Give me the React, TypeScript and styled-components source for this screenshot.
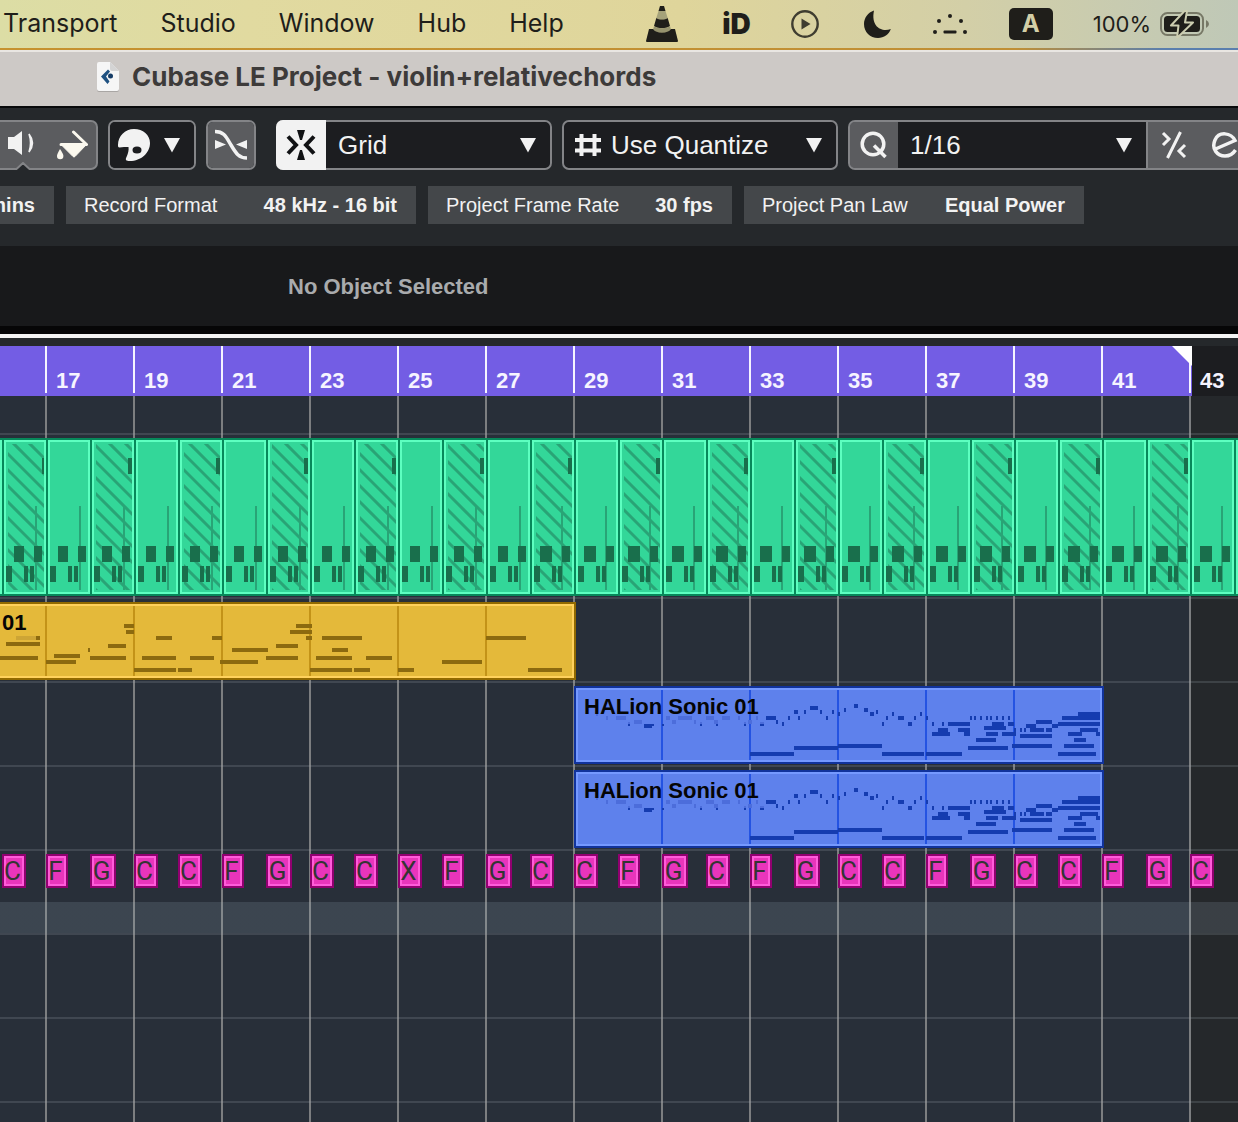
import React from "react";
import styled, { createGlobalStyle } from "styled-components";

const GlobalStyle = createGlobalStyle`
  *, *::before, *::after { box-sizing: border-box; }
  body {
    margin: 0;
    background: #25282b;
    font-family: "Liberation Sans", Arial, sans-serif;
    overflow: hidden;
  }
  button, select { font: inherit; color: inherit; }
`;

const Window = styled.div`
  display: flex;
  flex-direction: column;
  min-height: 100vh;
  overflow: hidden;
`;

/* ---------- system menu bar ---------- */

const MenuBar = styled.header`
  display: flex;
  align-items: center;
  height: 50px;
  padding: 0 28px 2px 3px;
  font-family: Inter, sans-serif;
  color: #1f1e1a;
  background:
    linear-gradient(90deg, #c6922f 0%, #c08f35 82%, #5a7fae 94%) 0 100% / 100% 2px no-repeat,
    linear-gradient(90deg, #dcdda5 0%, #e1daa0 20%, #dfd59b 55%, #d3cfa7 78%, #bfc8b7 100%);
`;

const MenuNav = styled.nav`
  display: flex;
  gap: 43px;
  padding-bottom: 2px;
`;

const MenuItem = styled.button`
  padding: 0;
  border: 0;
  background: none;
  font-size: 25px;
  line-height: 32px;
`;

const StatusArea = styled.div`
  display: flex;
  align-items: center;
  gap: 40px;
  margin-left: auto;
`;

const StatusButton = styled.button`
  display: flex;
  align-items: center;
  gap: 9px;
  padding: 0;
  border: 0;
  background: none;
  font-size: 22px;
  line-height: 32px;
  svg { display: block; flex: none; }
`;

const AppMark = styled.span`
  font-size: 28px;
  font-weight: 900;
  line-height: 32px;
`;

const InputSource = styled.span`
  display: block;
  width: 44px;
  height: 32px;
  border-radius: 5px;
  background: #1f1e1a;
  color: #d3cfa7;
  font-size: 24px;
  font-weight: 700;
  line-height: 32px;
  text-align: center;
`;

/* ---------- title bar ---------- */

const TitleBar = styled.div`
  display: flex;
  align-items: center;
  gap: 12px;
  height: 58px;
  padding: 0 96px 4px;
  border-top: 2px solid #e9e6e2;
  border-bottom: 2px solid #08090a;
  background: #cdc9c6;
  svg { flex: none; }
`;

const Title = styled.h1`
  margin: 0;
  font-family: Inter, sans-serif;
  font-size: 26px;
  font-weight: 700;
  line-height: 32px;
  color: #3d3b3a;
  white-space: nowrap;
`;

/* ---------- toolbar ---------- */

const Toolbar = styled.div`
  display: flex;
  gap: 10px;
  padding-top: 12px;
  background: #25282b;
  color: #f2f2f2;
`;

const ToolButton = styled.button<{ $tone?: "grey" | "light" | "dark" }>`
  display: flex;
  flex: 1 0 46px;
  align-items: center;
  justify-content: center;
  gap: 12px;
  height: 46px;
  padding: 0;
  border: 0;
  background: ${(p) => (p.$tone === "light" ? "#f2f2f2" : p.$tone === "dark" ? "#1c1d20" : "#5b5c5f")};
  color: ${(p) => (p.$tone === "light" ? "#111214" : "#f2f2f2")};
  svg { display: block; flex: none; }
`;

const Group = styled.div<{ $width?: number }>`
  display: flex;
  flex: none;
  width: ${(p) => (p.$width ? p.$width + "px" : "auto")};
  height: 50px;
  border: 2px solid #838487;
  border-radius: 7px;
  background: #1c1d20;
  overflow: hidden;
`;

const ToolGroup = styled(Group)`
  position: relative;
  border-left: 0;
  border-radius: 0 7px 7px 0;
  background: #5b5c5f;
  overflow: visible;
  > ${ToolButton} {
    background: none;
  }
  > ${ToolButton}:first-child {
    padding: 0 4px 4px 0;
  }
`;

const ActiveNotch = styled.svg`
  position: absolute;
  bottom: -2px;
  left: 15px;
`;

const PaletteGroup = styled(Group)`
  > ${ToolButton} {
    padding-right: 6px;
  }
`;

const SnapGroup = styled(Group)`
  margin-left: 10px;
  overflow: visible;
  > ${ToolButton} {
    flex: 0 0 50px;
    height: 50px;
    margin: -2px 0 0 -2px;
    border-radius: 7px 0 0 7px;
  }
`;

const QuantizeGroup = styled(Group)`
  flex: 1 0 390px;
  border-right: 0;
  border-radius: 7px 0 0 7px;
  background: #5b5c5f;
  > ${ToolButton} {
    flex: 0 0 48px;
  }
`;

const Field = styled.label<{ $width?: number; $inset?: number }>`
  display: flex;
  flex: ${(p) => (p.$width ? `0 0 ${p.$width}px` : "1")};
  align-items: center;
  gap: 9px;
  min-width: 0;
  padding: 0 13px 0 ${(p) => p.$inset ?? 12}px;
  background: #1c1d20;
  border-radius: inherit;
  svg { flex: none; }
`;

const QuantizeField = styled(Field)`
  border-right: 2px solid #838487;
  border-radius: 0;
`;

const EditorButtons = styled.div`
  display: flex;
  flex: none;
  > ${ToolButton} {
    flex: 0 0 51px;
  }
`;

const Select = styled.select`
  flex: 1;
  min-width: 0;
  height: 46px;
  padding: 0;
  border: 0;
  outline: 0;
  appearance: none;
  background: transparent;
  font-size: 26px;
`;

/* ---------- project status line ---------- */

const StatusLine = styled.div`
  display: flex;
  gap: 12px;
  padding: 16px 0 22px;
  background: #25282b;
`;

const Pill = styled.div<{ $width: number }>`
  display: flex;
  flex: none;
  align-items: center;
  justify-content: ${(p) => (p.$width < 100 ? "flex-end" : "space-between")};
  width: ${(p) => p.$width}px;
  height: 38px;
  padding: 0 19px 0 18px;
  overflow: hidden;
  background: #44474a;
  color: #f2f2f2;
  font-size: 20px;
  line-height: 24px;
  white-space: nowrap;
`;

const InfoLine = styled.div`
  height: 92px;
  padding-left: 288px;
  border-bottom: 4px solid #f4f4f4;
  background: linear-gradient(#18191b 80px, #060607 80px);
  color: #a9abad;
  font-size: 22px;
  font-weight: 700;
  line-height: 82px;
`;

/* ---------- timeline ---------- */

const BAR_PAIR = 88;
const ORIGIN = 45;
const SONG_END = 1192;

const Ruler = styled.div`
  display: flex;
  height: 58px;
  padding-left: ${ORIGIN}px;
  border-top: 8px solid #25282b;
  background: linear-gradient(90deg, #735de4 ${SONG_END}px, #1c1d20 ${SONG_END}px);
`;

const RulerMark = styled.div`
  position: relative;
  flex: 0 0 ${BAR_PAIR}px;
  height: 47px;
  padding: 22px 0 0 9px;
  border-left: 2px solid #f6f4ff;
  color: #f6f4ff;
  font-size: 22px;
  font-weight: 700;
  line-height: 25px;
`;

const EndFlag = styled.svg`
  position: absolute;
  top: 0;
  left: -19px;
`;

const Arrangement = styled.main`
  display: flex;
  flex: 1;
  flex-direction: column;
  overflow: hidden;
  background:
    linear-gradient(90deg, #7c7e80 2px, transparent 2px) ${ORIGIN}px 0 / ${BAR_PAIR}px 100%,
    linear-gradient(90deg, #282f39 ${SONG_END - 1}px, #25282b ${SONG_END - 1}px);
`;

const Track = styled.section<{ $height: number }>`
  display: flex;
  flex: none;
  align-items: flex-start;
  height: ${(p) => p.$height}px;
  padding-top: 3px;
  border-bottom: 2px solid rgba(160, 170, 180, 0.2);
`;

const ChordTrack = styled(Track)`
  padding-left: 2px;
  background: linear-gradient(transparent 51px, rgba(160, 180, 195, 0.17) 51px);
`;

const DrumClip = styled.div`
  flex: 0 0 44px;
  height: 158px;
  border: solid #07885a;
  border-width: 2px 0 2px 2px;
  background: #33d799;
  box-shadow: inset 0 0 0 2px #5dffc0;
  svg { display: block; }
`;

const DrumLane = styled.div`
  display: flex;
  margin-left: -42px;
`;

const tones = {
  gold: { edge: "#916900", rim: "#ffd15c", fill: "#e4b93a", bar: "#c39318", note: "#8c6a0f", faint: "#cda535" },
  blue: { edge: "#11339c", rim: "#7599ff", fill: "#5e81ec", bar: "#2453e2", note: "#153cb0", faint: "#4c6ddb" },
};
type Tone = keyof typeof tones;

const Clip = styled.div<{ $tone: Tone; $start: number; $width: number }>`
  position: relative;
  flex: none;
  width: ${(p) => p.$width}px;
  height: 78px;
  margin-left: ${(p) => p.$start}px;
  border: 2px solid ${(p) => tones[p.$tone].edge};
  border-left-width: ${(p) => (p.$start ? 2 : 0)}px;
  background: ${(p) => tones[p.$tone].fill};
  box-shadow: inset ${(p) => (p.$start ? "0 0" : "-2px 0")} 0 ${(p) => (p.$start ? 2 : 0)}px ${(p) => tones[p.$tone].rim},
    inset 0 2px ${(p) => tones[p.$tone].rim}, inset 0 -2px ${(p) => tones[p.$tone].rim};
`;

const ClipNotes = styled.svg`
  position: absolute;
  inset: 0;
`;

const ClipName = styled.span<{ $inset: number }>`
  position: relative;
  display: block;
  padding: 6px 0 0 ${(p) => p.$inset}px;
  color: #050505;
  font-size: 22px;
  font-weight: 700;
  line-height: 25px;
`;

const ChordCell = styled.div`
  flex: 0 0 44px;
`;

const Chord = styled.span<{ $width: number }>`
  display: block;
  width: ${(p) => p.$width}px;
  height: 34px;
  border: 2px solid #910070;
  background: #e935bb;
  box-shadow: inset 0 0 0 2px #ff5cda;
  color: #343434;
  font-family: Roboto, sans-serif;
  font-size: 26px;
  line-height: 30px;
  text-align: center;
  text-indent: -3px;
`;

/* ---------- icons ---------- */

const ConeIcon = () => (
  <svg width="36" height="36" viewBox="0 0 36 36" fill="#1f1e1a" aria-hidden="true">
    <path d="M14 0h4l1.5 5h-7z" />
    <path d="M12.5 5h7l2.2 7c-3 2-8.400 2-11.400 0z" fill="#a5a27a" />
    <path d="M10.300 12c3 2 8.400 2 11.400 0l2.300 8c-4 3-12 3-16 0z" />
    <path d="M8 20c4 3 12 3 16 0l1 4c-4 4-14 4-18 0z" fill="#96936e" />
    <path d="M3 23h4c3 5 15 5 18 0h4l3 12q0 1-1 1H1q-1 0-1-1z" />
  </svg>
);
const PlayIcon = () => (
  <svg width="28" height="28" viewBox="0 0 28 28" aria-hidden="true">
    <circle cx="14" cy="14" r="12.700" fill="none" stroke="#3f3d30" strokeWidth="2.400" />
    <path d="M10.500 8.500v11l9-5.500z" fill="#3f3d30" />
  </svg>
);
const MoonIcon = () => (
  <svg width="32" height="28" viewBox="-3 0 32 28" fill="#1f1e1a" aria-hidden="true">
    <path d="M12 .5C6 2.500 2 8 2 14c0 8 6 14 14 14 6 0 11-3.500 12.800-9C20 22.500 8.500 17 12 .5z" />
  </svg>
);
const DotsIcon = () => (
  <svg width="38" height="24" viewBox="-1 0 38 24" fill="#1f1e1a" aria-hidden="true">
    <circle cx="18" cy="4" r="2" /><circle cx="7" cy="9" r="2" /><circle cx="29" cy="9" r="2" />
    <circle cx="3" cy="20" r="2" /><circle cx="33" cy="20" r="2" />
    <rect x="11.500" y="18.500" width="13" height="3" rx="1" />
  </svg>
);
const BatteryIcon = () => (
  <svg width="50" height="28" viewBox="0 0 50 28" aria-hidden="true">
    <rect x="1" y="3" width="42" height="22" rx="6.500" fill="none" stroke="#777866" strokeWidth="2" />
    <rect x="4" y="6" width="36" height="16" rx="3.500" fill="#1f1e1a" />
    <path d="M46 10v8q3-1.500 3-4t-3-4z" fill="#777866" />
    <path d="M24.500 1L11 15.500h7.500L17 28 33 12.500h-8L27 1z" fill="#1f1e1a" stroke="#cccdb0" strokeWidth="2" strokeLinejoin="round" />
  </svg>
);
const DocumentIcon = () => (
  <svg width="24" height="30" viewBox="0 0 24 30" aria-hidden="true">
    <path d="M3 1h11l9 9v18q0 2-2 2H3q-2 0-2-2V3q0-2 2-2z" fill="#a9a6a4" />
    <path d="M3 0h11l9 9v18q0 2-2 2H3q-2 0-2-2V2q0-2 2-2z" fill="#f6f6f6" />
    <path d="M14 0v7q0 2 2 2h7z" fill="#d4d4d4" />
    <path d="M12 7.500L5 14.500l6.500 7.500 2-2.500-3.500-5 4-5z" fill="#1f5181" />
    <circle cx="14.500" cy="14" r="2.500" fill="#163d67" />
  </svg>
);
const Arrow = () => (
  <svg width="18" height="16" viewBox="0 0 18 16" fill="#f2f2f2" aria-hidden="true"><path d="M1 1h16L9 15.500z" /></svg>
);
const SpeakerIcon = () => (
  <svg width="30" height="26" viewBox="0 0 30 26" aria-hidden="true">
    <path d="M1 7h6l8-6v24l-8-6H1z" fill="#f2f2f2" />
    <path d="M22 4q7 9 0 18 3-9 0-18z" fill="#f2f2f2" stroke="#f2f2f2" strokeWidth="1.500" />
  </svg>
);
const BucketIcon = () => (
  <svg width="32" height="30" viewBox="0 0 32 30" aria-hidden="true">
    <path d="M5 14.500h25.500L19 26.500q-1 1-2 0z" fill="#fbf8ee" stroke="#fbf8ee" strokeLinejoin="round" />
    <path d="M17.500 2L30.500 14.500M5 14.500h25" fill="none" stroke="#fbf8ee" strokeWidth="3" strokeLinecap="round" />
    <path d="M4 19q-3 5-3 7a3.200 3.200 0 0 0 6.400 0q0-2-3.400-7z" fill="#fbf8ee" />
  </svg>
);
const PaletteIcon = () => (
  <svg width="34" height="34" viewBox="0 0 34 34" aria-hidden="true">
    <path d="M1 17C1 8 8 1 17 1c9 0 16 6 16 14 0 10-9 18-20 18-4 0-5-1-3.500-4 1.500-3 2.500-7 2-10-3 0-6 0-9 .5-1.500 0-1.500-1-1.500-2.500z" fill="#f2f2f2" />
    <ellipse cx="20" cy="22" rx="4.500" ry="3.500" fill="#1c1d20" />
  </svg>
);
const CrossfadeIcon = () => (
  <svg width="34" height="32" viewBox="0 0 34 32" aria-hidden="true">
    <path d="M1 2.500c9 0 11 5 16 13.500s8 13 16 13" fill="none" stroke="#f2f2f2" strokeWidth="3.500" />
    <path d="M1 11l11 4.500L1 20zM33 11l-11 4.500L33 20z" fill="#f2f2f2" />
  </svg>
);
const SnapIcon = () => (
  <svg width="30" height="32" viewBox="0 0 30 32" aria-hidden="true">
    <path d="M2 7.500l8 8.500-8 8.500M28 7.500L20 16l8 8.500" fill="none" stroke="#111214" strokeWidth="4" />
    <path d="M11 1h8l-3 10h-2zM11 31h8l-3-10h-2z" fill="#111214" />
  </svg>
);
const HashIcon = () => (
  <svg width="28" height="26" viewBox="0 0 28 26" aria-hidden="true">
    <path d="M7.500 2v22M20.500 2v22M1 8h26M1 18.500h26" fill="none" stroke="#f2f2f2" strokeWidth="4" />
  </svg>
);
const QIcon = () => (
  <svg width="28" height="28" viewBox="0 0 28 28" fill="none" stroke="#f2f2f2" strokeWidth="3.500" aria-hidden="true">
    <circle cx="13" cy="13" r="10.800" /><path d="M14 14.500l11.500 11.500" />
  </svg>
);
const SwapIcon = () => (
  <svg width="26" height="28" viewBox="0 0 26 28" fill="none" stroke="#f2f2f2" strokeWidth="3" aria-hidden="true">
    <path d="M19.500 1L6.500 27M2 2l6 6-6 6M24 14l-6 6 6 6" />
  </svg>
);
const EditIcon = () => (
  <svg width="28" height="28" viewBox="0 0 28 28" fill="none" stroke="#f2f2f2" strokeWidth="3.500" aria-hidden="true">
    <path d="M4.500 18L24 9.500C20 1.500 8 0 4 9c-4 9 2.500 16 10 16 5 0 8-2 10.500-6" />
  </svg>
);

/* ---------- clip data: [start, end, top] from the clip's inner corner ---------- */

type Note = [number, number, number, number?];

const violinNotes: Note[] = [
  [36, 40, 32], [6, 40, 38], [0, 38, 52], [46, 76, 56], [54, 80, 50], [88, 90, 44], [90, 126, 52],
  [108, 126, 40], [124, 134, 20], [126, 134, 26], [134, 176, 64], [178, 192, 64], [142, 176, 52],
  [156, 172, 32], [190, 214, 52], [212, 222, 32], [220, 258, 56], [232, 268, 44], [266, 298, 52],
  [276, 298, 40], [290, 312, 26], [296, 312, 20], [306, 312, 32], [322, 362, 32], [332, 348, 44],
  [316, 352, 52], [366, 392, 52], [310, 352, 64], [354, 370, 64], [398, 414, 64], [442, 482, 56],
  [486, 526, 32], [528, 562, 64],
];
const violinFaint: Note[] = [[16, 36, 32]];

const sonicNotes: Note[] = [
  [52, 54, 36, 2], [68, 76, 36], [76, 78, 36, 2], [86, 88, 36, 2], [124, 126, 36, 2], [140, 142, 36, 2],
  [168, 170, 36, 2], [184, 188, 36, 2], [190, 200, 28], [200, 202, 32], [206, 208, 34], [212, 214, 28],
  [218, 222, 22], [222, 224, 28], [228, 230, 22], [234, 242, 18], [244, 246, 22], [250, 252, 28],
  [256, 258, 22], [262, 264, 24], [268, 270, 20], [174, 218, 64], [218, 262, 58], [262, 306, 56],
  [278, 282, 16], [288, 292, 20], [294, 298, 24], [300, 302, 22], [306, 308, 34], [310, 312, 28],
  [316, 318, 24], [322, 328, 28], [332, 336, 34], [338, 340, 28], [344, 346, 24], [350, 352, 28],
  [356, 358, 34], [366, 368, 34], [372, 394, 34], [306, 348, 64], [350, 386, 64], [356, 374, 44],
  [362, 372, 40], [382, 394, 40], [388, 394, 44], [394, 396, 28], [398, 400, 28], [404, 406, 28],
  [410, 412, 28], [414, 416, 28], [420, 422, 28], [426, 428, 28], [432, 434, 28], [408, 430, 38],
  [416, 428, 34], [432, 438, 34], [410, 422, 44], [426, 440, 44], [438, 440, 40], [400, 420, 50],
  [392, 432, 58], [436, 476, 56], [444, 446, 40], [448, 450, 40], [444, 476, 46], [450, 460, 36],
  [454, 468, 40], [460, 476, 32], [470, 476, 40], [476, 482, 36], [482, 524, 34], [486, 524, 28],
  [502, 524, 24], [504, 522, 40], [492, 506, 44], [520, 524, 44], [498, 510, 50], [488, 518, 56],
  [482, 520, 64],
];
const sonicFaint: Note[] = [
  [20, 22, 26, 2], [30, 32, 28], [40, 50, 28], [58, 66, 32], [90, 94, 28], [96, 100, 32], [102, 116, 28],
  [118, 120, 32], [130, 138, 28], [138, 142, 32], [146, 154, 28], [162, 164, 28], [172, 176, 32],
  [180, 182, 28], [184, 188, 34, 2], [52, 54, 34, 2], [124, 126, 34, 2], [168, 170, 34, 2],
];

const NoteView = ({ tone, width, bars, notes, faint }: { tone: Tone; width: number; bars: number[]; notes: Note[]; faint: Note[] }) => {
  const c = tones[tone];
  const rect = (fill: string) => ([a, b, y, h = 4]: Note, i: number) => (
    <rect key={fill + i} x={a} y={y} width={b - a} height={h} fill={fill} />
  );
  return (
    <ClipNotes width={width} height="74" shapeRendering="crispEdges" aria-hidden="true">
      {bars.map((x) => <rect key={x} x={x} y="2" width="2" height="70" fill={c.bar} />)}
      {faint.map(rect(c.faint))}
      {notes.map(rect(c.note))}
    </ClipNotes>
  );
};

const SonicClip = () => (
  <Clip $tone="blue" $start={574} $width={530}>
    <NoteView tone="blue" width={526} bars={[85, 173, 261, 349, 437]} notes={sonicNotes} faint={sonicFaint} />
    <ClipName $inset={8}>HALion Sonic 01</ClipName>
  </Clip>
);

const DrumPart = ({ index }: { index: number }) => {
  const hatched = index % 2 === 1;
  const late = index > 12;
  const shift = index % 4 === 1 ? 0 : 8;
  return (
    <DrumClip>
      <svg width="42" height="154" fill="#196f4c" shapeRendering="crispEdges" aria-hidden="true">
        {hatched && (
          <svg x="4" y="4" width="36" height="146" shapeRendering="auto">
            <path
              d={Array.from({ length: 13 }, (_, k) => `M-4 ${k * 16 - 42 + shift}l48 48`).join("")}
              stroke="#29a476" strokeWidth="3" fill="none"
            />
          </svg>
        )}
        <rect x={late ? 29 : 31} y="66" width="2" height="84" fill="#29a476" />
        {hatched && <rect x={index === 1 ? 38 : 36} y="18" width={index === 1 ? 2 : 4} height="16" />}
        <rect x={late ? 8 : 10} y="106" width={late ? 12 : 10} height="16" />
        <rect x="30" y="106" width="8" height="16" />
        <rect x="2" y="126" width="6" height="16" />
        <rect x="20" y="126" width="4" height="16" />
        <rect x="26" y="126" width="4" height="16" />
      </svg>
    </DrumClip>
  );
};

const chordWidths: Record<string, number> = { C: 24, F: 22, G: 26, X: 24 };
const chords = "CFGCCFGCCXFGCCFGCFGCCFGCCFGC".split("");
const rulerBars = Array.from({ length: 14 }, (_, i) => 17 + i * 2);
const menus = ["Transport", "Studio", "Window", "Hub", "Help"];

export default function App() {
  return (
    <Window>
      <GlobalStyle />
      <MenuBar>
        <MenuNav aria-label="Application menu">
          {menus.map((m) => <MenuItem key={m}>{m}</MenuItem>)}
        </MenuNav>
        <StatusArea>
          <StatusButton aria-label="VLC"><ConeIcon /></StatusButton>
          <StatusButton><AppMark>iD</AppMark></StatusButton>
          <StatusButton aria-label="Now playing"><PlayIcon /></StatusButton>
          <StatusButton aria-label="Focus"><MoonIcon /></StatusButton>
          <StatusButton aria-label="Control"><DotsIcon /></StatusButton>
          <StatusButton><InputSource>A</InputSource></StatusButton>
          <StatusButton>100% <BatteryIcon /></StatusButton>
        </StatusArea>
      </MenuBar>

      <TitleBar>
        <DocumentIcon />
        <Title>Cubase LE Project - violin+relativechords</Title>
      </TitleBar>

      <Toolbar>
        <ToolGroup $width={98}>
          <ToolButton aria-label="Play tool"><SpeakerIcon /></ToolButton>
          <ToolButton aria-label="Color tool"><BucketIcon /></ToolButton>
          <ActiveNotch width="16" height="8" aria-hidden="true">
            <path d="M1 8l7-7 7 7z" fill="#25282b" />
            <path d="M0 7h1.500L8 1l6.500 6H16" fill="none" stroke="#838487" strokeWidth="2" />
          </ActiveNotch>
        </ToolGroup>
        <PaletteGroup $width={88}>
          <ToolButton $tone="dark" aria-label="Color menu"><PaletteIcon /><Arrow /></ToolButton>
        </PaletteGroup>
        <Group $width={50}>
          <ToolButton aria-label="Snap to zero crossing"><CrossfadeIcon /></ToolButton>
        </Group>
        <SnapGroup $width={276}>
          <ToolButton $tone="light" aria-label="Snap"><SnapIcon /></ToolButton>
          <Field>
            <Select aria-label="Snap type" defaultValue="Grid"><option>Grid</option></Select>
            <Arrow />
          </Field>
        </SnapGroup>
        <Group $width={276}>
          <Field $inset={10}>
            <HashIcon />
            <Select aria-label="Grid type" defaultValue="Use Quantize"><option>Use Quantize</option></Select>
            <Arrow />
          </Field>
        </Group>
        <QuantizeGroup>
          <ToolButton aria-label="Apply quantize"><QIcon /></ToolButton>
          <QuantizeField $width={250}>
            <Select aria-label="Quantize preset" defaultValue="1/16"><option>1/16</option></Select>
            <Arrow />
          </QuantizeField>
          <EditorButtons>
            <ToolButton aria-label="Iterative quantize"><SwapIcon /></ToolButton>
            <ToolButton aria-label="Open quantize panel"><EditIcon /></ToolButton>
          </EditorButtons>
        </QuantizeGroup>
      </Toolbar>

      <StatusLine>
        <Pill $width={54}><b>mins</b></Pill>
        <Pill $width={350}><span>Record Format</span><b>48 kHz - 16 bit</b></Pill>
        <Pill $width={304}><span>Project Frame Rate</span><b>30 fps</b></Pill>
        <Pill $width={340}><span>Project Pan Law</span><b>Equal Power</b></Pill>
      </StatusLine>

      <InfoLine>No Object Selected</InfoLine>

      <Ruler>
        {rulerBars.map((n) => (
          <RulerMark key={n}>
            {n}
            {n === 43 && (
              <EndFlag width="20" height="20" aria-hidden="true"><path d="M0 0h20v20z" fill="#fff" /></EndFlag>
            )}
          </RulerMark>
        ))}
      </Ruler>

      <Arrangement>
        <Track $height={39} />
        <Track $height={164}>
          <DrumLane>
            {Array.from({ length: 30 }, (_, i) => <DrumPart key={i} index={i} />)}
          </DrumLane>
        </Track>
        <Track $height={84}>
          <Clip $tone="gold" $start={0} $width={576}>
            <NoteView tone="gold" width={574} bars={[45, 133, 221, 309, 397, 485]} notes={violinNotes} faint={violinFaint} />
            <ClipName $inset={2}>01</ClipName>
          </Clip>
        </Track>
        <Track $height={84}><SonicClip /></Track>
        <Track $height={84}><SonicClip /></Track>
        <ChordTrack $height={84}>
          {chords.map((c, i) => (
            <ChordCell key={i}><Chord $width={chordWidths[c]}>{c}</Chord></ChordCell>
          ))}
        </ChordTrack>
        <Track $height={84} />
        <Track $height={84} />
      </Arrangement>
    </Window>
  );
}
